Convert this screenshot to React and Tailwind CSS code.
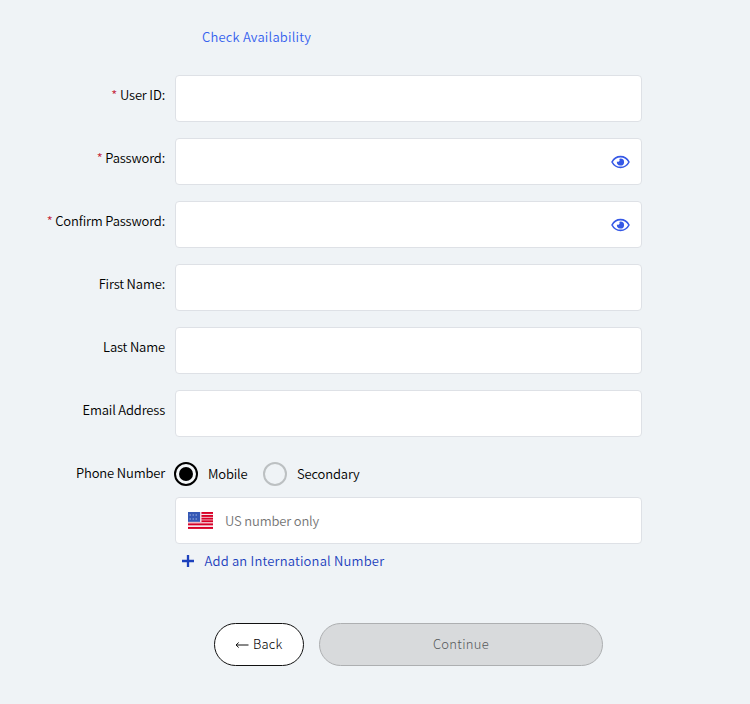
import React from "react";

function EyeIcon() {
  return (
    <svg width="19" height="14" viewBox="0 0 19 14" fill="none" className="block">
      <path
        d="M1 7C3 3.200 6 1.600 9.500 1.600S16 3.200 18 7c-2 3.800-5 5.400-8.500 5.400S3 10.800 1 7Z"
        stroke="#3558e6"
        strokeWidth="1.600"
        strokeLinejoin="round"
      />
      <path d="M9.500 3.400a3.600 3.600 0 1 1-3.600 3.200c.9.400 1.600.3 2.200-.3.600-.6.700-1.500.2-2.400.3-.3.700-.5 1.200-.5Z" fill="#3558e6" />
    </svg>
  );
}

function FlagIcon() {
  return (
    <svg width="25" height="17" viewBox="0 0 25 17" className="block">
      <rect width="25" height="17" fill="#f6e6ec" />
      {[0, 3, 5.700, 8.300, 11.400, 15].map((y) => (
        <rect key={y} y={y} width="25" height="1.900" fill="#d80027" />
      ))}
      <rect width="13.500" height="10" fill="#f0d5df" />
      <rect width="12" height="9.800" fill="#3558b5" />
      {[3, 7].map((y) =>
        [2, 5, 8].map((x) => (
          <rect key={`${x}-${y}`} x={x - 0.5} y={y - 0.5} width="1.500" height="1" fill="#a3b2df" />
        ))
      )}
    </svg>
  );
}

function Row({ label, required, secret }) {
  return (
    <div className="flex h-[47px]">
      <div className="w-[165px] shrink-0 pt-[10px] text-right leading-5 whitespace-nowrap">
        {required && <span className="text-[#c4283c]">* </span>}
        <span>{label}</span>
      </div>
      <div className="ml-[10px] flex w-[467px] items-center justify-end rounded-[4px] border border-[#dee1e6] bg-white pr-[11px]">
        {secret && <EyeIcon />}
      </div>
    </div>
  );
}

export default function App() {
  return (
    <div className="h-[704px] w-[750px] overflow-hidden bg-[#eff3f6] font-['Noto_Sans_CJK_SC',sans-serif] text-[13px] font-[350] tracking-[-0.16px] text-black">
      <div className="h-[75px] pt-[27px] pl-[202px] leading-5 tracking-[0.2px] text-[#3561ee]">
        Check Availability
      </div>

      <div className="flex flex-col gap-4">
        <Row label="User ID:" required />
        <Row label="Password:" required secret />
        <Row label="Confirm Password:" required secret />
        <Row label="First Name:" />
        <Row label="Last Name" />
        <Row label="Email Address" />
      </div>

      <div className="mt-[25px] flex h-6">
        <div className="w-[165px] pt-px text-right leading-5">Phone Number</div>
        <div className="ml-[9px] flex size-6 items-center justify-center rounded-full border-2 border-black bg-[#f4f7f9]">
          <div className="size-[14px] rounded-full bg-black" />
        </div>
        <div className="w-[55px] pl-[10px] leading-6">Mobile</div>
        <div className="ml-[10px] size-6 rounded-full border-2 border-[#bcc0c2]" />
        <div className="pl-[10px] leading-6">Secondary</div>
      </div>

      <div className="mt-[11px] ml-[175px] flex h-[47px] w-[467px] items-center rounded-[4px] border border-[#dee1e6] bg-white pl-3">
        <FlagIcon />
        <span className="ml-3 text-[#757575]">US number only</span>
      </div>

      <div className="mt-[7px] ml-[182px] flex h-5 items-center text-[#1c41bd]">
        <svg width="12" height="12" viewBox="0 0 12 12" className="block">
          <path d="M6 0v12M0 6h12" stroke="#1c41bd" strokeWidth="2.300" />
        </svg>
        <span className="ml-[10.5px] leading-5 tracking-[0.18px]">Add an International Number</span>
      </div>

      <div className="mt-[52px] ml-[214px] flex gap-[15px]">
        <button className="flex h-[43px] w-[90px] items-center rounded-[22px] border border-[#111] bg-white pl-5 pb-px leading-5 font-light tracking-[0.2px]">
          <svg width="14" height="8" viewBox="0 0 14 8" fill="none" className="mt-0.5 mr-1 block">
            <path d="M13.500 4H1M3.700 1.500 1 4l2.700 2.500" stroke="#111" strokeWidth="1" />
          </svg>
          Back
        </button>
        <button className="h-[43px] w-[284px] rounded-[22px] border border-[#adafb1] bg-[#d8dadc] pb-px leading-5 font-light tracking-[0.3px] text-[#55585a]">
          Continue
        </button>
      </div>
    </div>
  );
}
